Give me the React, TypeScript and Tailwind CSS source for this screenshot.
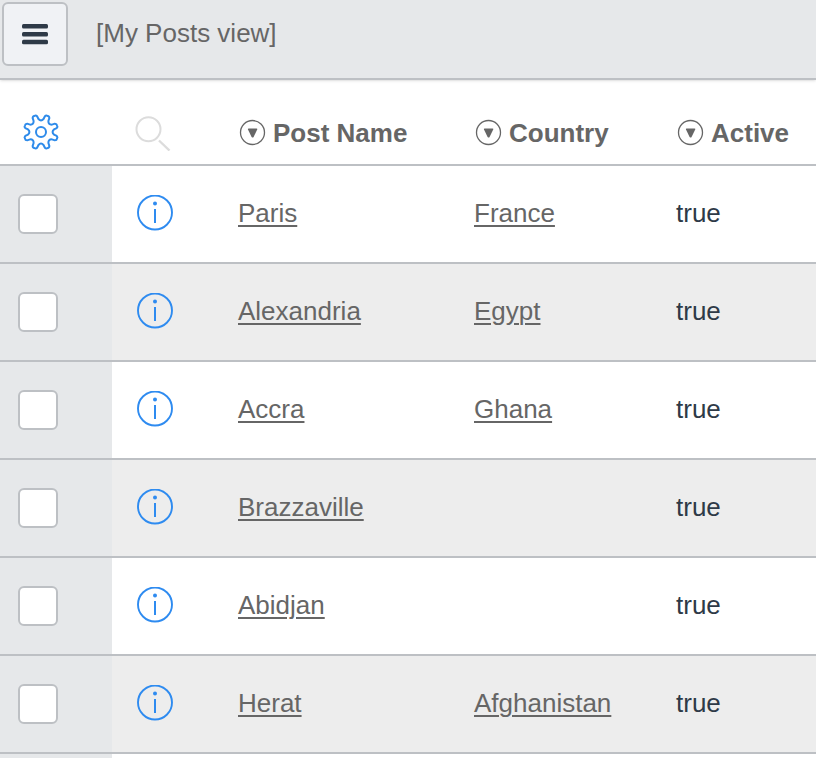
const posts = [
  { name: 'Paris', country: 'France', active: true },
  { name: 'Alexandria', country: 'Egypt', active: true },
  { name: 'Accra', country: 'Ghana', active: true },
  { name: 'Brazzaville', country: '', active: true },
  { name: 'Abidjan', country: '', active: true },
  { name: 'Herat', country: 'Afghanistan', active: true },
];

const polar = (angle: number, radius: number) => {
  const rad = (angle * Math.PI) / 180;
  return `${(19 + radius * Math.sin(rad)).toFixed(2)} ${(19 - radius * Math.cos(rad)).toFixed(2)}`;
};

// eight rounded teeth with a shallow bowl between each pair
const gearPath =
  [0, 45, 90, 135, 180, 225, 270, 315]
    .map(
      (a, i) =>
        `${i === 0 ? 'M' : 'L'}${polar(a - 14, 16.2)} L${polar(a - 11, 13.2)} Q${polar(a, 10.2)} ${polar(a + 11, 13.2)} L${polar(a + 14, 16.2)} Q${polar(a + 17, 17.8)} ${polar(a + 22.5, 17.3)} Q${polar(a + 28, 17.8)} ${polar(a + 31, 16.2)}`
    )
    .join(' ') + ' Z';

const GearIcon = () => (
  <svg className="block h-[38px] w-[38px]" viewBox="0 0 38 38" fill="none" stroke="#2e8bea" strokeWidth="2" strokeLinejoin="round">
    <path d={gearPath} />
    <circle cx="19" cy="19" r="5" />
  </svg>
);

const SearchIcon = () => (
  <svg className="block h-[38px] w-[38px]" viewBox="0 0 38 38" fill="none" stroke="#dcdcdc" strokeWidth="2">
    <circle cx="14.5" cy="16.3" r="12" />
    <path d="M25 27.5 35.5 37.5" strokeWidth="2.4" />
  </svg>
);

const InfoIcon = () => (
  <svg className="block h-[38px] w-[38px]" viewBox="0 0 38 38" fill="none" stroke="#2e8bf0" strokeWidth="1.9">
    <circle cx="19" cy="17.5" r="17" />
    <path d="M19 14v14" strokeWidth="2" />
    <circle cx="19" cy="8.5" r="2" fill="#2e8bf0" stroke="none" />
  </svg>
);

const MenuIcon = () => (
  <svg className="block h-7 w-7" viewBox="0 0 28 28" fill="#2e3a47">
    <rect x="1" y="4" width="26" height="4.4" rx="1.5" />
    <rect x="1" y="12" width="26" height="4.4" rx="1.5" />
    <rect x="1" y="19.8" width="26" height="4.4" rx="1.5" />
  </svg>
);

const SortIcon = () => (
  <svg className="block h-7 w-7" viewBox="0 0 28 28">
    <circle cx="14.5" cy="13.5" r="12" fill="none" stroke="#666" strokeWidth="1.3" />
    <path d="M10.6 9.6h8q1 0 .6 1l-3.6 7.4q-1 1.2-2 0l-3.6-7.4q-.4-1 .6-1z" fill="#666" />
  </svg>
);

const ColumnHeader = ({ title }: { title: string }) => (
  <th scope="col" className="border-b-2 border-[#bdc0c4] pt-[22px] pl-4 text-left">
    <div className="flex items-center gap-[7px] text-[#666]">
      <button type="button" aria-label={`${title} column options`}>
        <SortIcon />
      </button>
      <span className="font-bold whitespace-nowrap">{title}</span>
    </div>
  </th>
);

const LinkCell = ({ value }: { value: string }) => (
  <td className="border-b-2 border-[#bdc0c4] pb-[2px] pl-4">
    {value && (
      <a href="#" className="text-[#666] underline decoration-2 underline-offset-3">
        {value}
      </a>
    )}
  </td>
);

const PostRow = ({ post }: { post: (typeof posts)[number] }) => (
  <tr className="h-[98px] even:bg-[#ededed]">
    <td className="border-b-2 border-[#bdc0c4] bg-[#e6e8ea] pl-[18px]">
      <input
        type="checkbox"
        aria-label={`Select ${post.name}`}
        className="block h-10 w-10 appearance-none rounded-md border-2 border-[#bdc0c4] bg-white checked:bg-[#2e8bf0]"
      />
    </td>
    <td className="border-b-2 border-[#bdc0c4] pl-6">
      <button type="button" className="block" aria-label={`Preview ${post.name}`}>
        <InfoIcon />
      </button>
    </td>
    <LinkCell value={post.name} />
    <LinkCell value={post.country} />
    <td className="border-b-2 border-[#bdc0c4] pb-[2px] pl-4">{String(post.active)}</td>
  </tr>
);

export default function App() {
  return (
    <div className="flex min-h-screen flex-col bg-white font-['Liberation_Sans',Arial,sans-serif] text-[26px] leading-8 text-[#2e3a47]">
      <header className="flex h-20 items-start gap-7 border-b-2 border-[#bdc0c4] bg-[#e6e8ea] p-[2px] shadow-sm">
        <button
          type="button"
          aria-label="List menu"
          className="flex h-16 w-[66px] items-center justify-center rounded-md border-2 border-[#bdc0c4] bg-[#f0f2f5]"
        >
          <MenuIcon />
        </button>
        <h1 className="flex h-16 items-center pb-[2px] text-[#666]">[My Posts view]</h1>
      </header>

      <table className="w-full table-fixed border-separate border-spacing-0">
        <colgroup>
          <col className="w-[112px]" />
          <col className="w-[110px]" />
          <col className="w-[236px]" />
          <col className="w-[202px]" />
          <col />
        </colgroup>
        <thead>
          <tr className="h-[86px]">
            <th className="border-b-2 border-[#bdc0c4] pt-5 pl-[22px]">
              <button type="button" className="block" aria-label="Personalize list">
                <GearIcon />
              </button>
            </th>
            <th className="border-b-2 border-[#bdc0c4] pt-5 pl-[22px]">
              <button type="button" className="block" aria-label="Search">
                <SearchIcon />
              </button>
            </th>
            <ColumnHeader title="Post Name" />
            <ColumnHeader title="Country" />
            <ColumnHeader title="Active" />
          </tr>
        </thead>
        <tbody>
          {posts.map((post) => (
            <PostRow key={post.name} post={post} />
          ))}
        </tbody>
      </table>
      <div className="w-28 grow bg-[#e6e8ea]" />
    </div>
  );
}
